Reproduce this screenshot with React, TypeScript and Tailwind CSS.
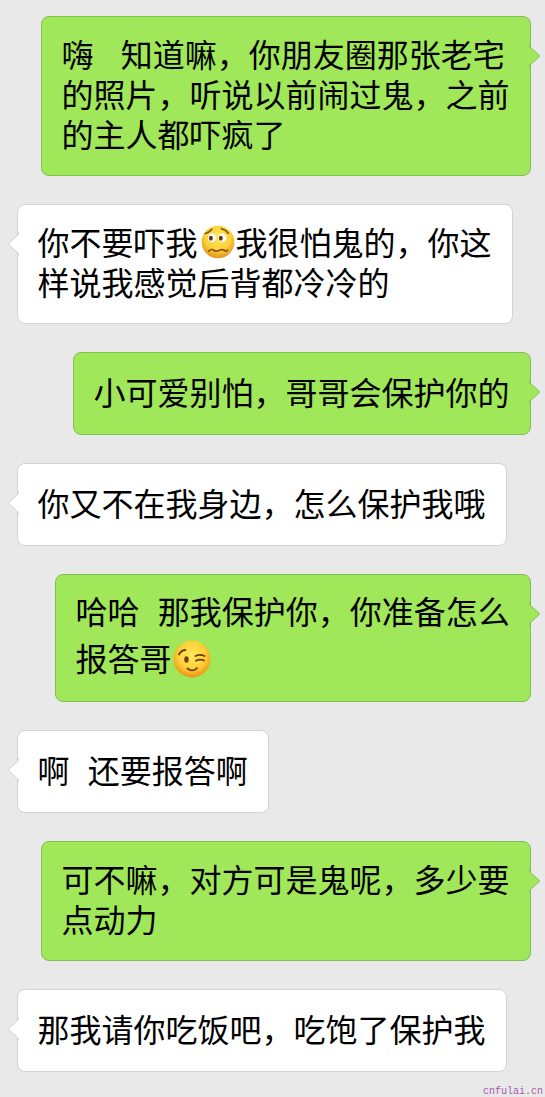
import React from 'react';
import clsx from 'clsx';

type Message = {
  id: number;
  mine: boolean;
  box: string;
  lines: React.ReactNode[];
};

function WorriedEmoji() {
  return (
    <svg viewBox="0 0 36 36" className="inline-block w-[34px] h-[34px] ml-[3px] mr-[1px] align-[-4px]">
      <defs>
        <radialGradient id="worried" cx="0.5" cy="0.35" r="0.65">
          <stop offset="0" stopColor="#ffe95c" />
          <stop offset="0.6" stopColor="#fbd13a" />
          <stop offset="1" stopColor="#e5921c" />
        </radialGradient>
      </defs>
      <circle cx="18" cy="18" r="17.3" fill="url(#worried)" />
      <ellipse cx="11.5" cy="13.500" rx="4.300" ry="4.600" fill="#fff" />
      <ellipse cx="22.500" cy="13.500" rx="4.300" ry="4.600" fill="#fff" />
      <ellipse cx="10.500" cy="14" rx="2" ry="2.600" fill="#5b3212" />
      <ellipse cx="21" cy="14" rx="2" ry="2.600" fill="#5b3212" />
      <g fill="none" stroke="#8a4f14" strokeWidth="1.7" strokeLinecap="round">
        <path d="M4.500 9C7 8.500 9.500 7 11.500 4.500" />
        <path d="M21.500 4C24 4.500 27 6 29 9" />
        <path d="M8 28C9.500 25.500 12 25.500 14 27S17 28 19 27S23 25.500 25 27S27 27.500 28 26.500" />
      </g>
    </svg>
  );
}

function WinkEmoji() {
  return (
    <svg viewBox="0 0 38 38" className="inline-block w-[38px] h-[38px] ml-[1px] align-[-7px]">
      <defs>
        <radialGradient id="wink" cx="0.5" cy="0.4" r="0.6">
          <stop offset="0" stopColor="#ffe85a" />
          <stop offset="0.6" stopColor="#ffd13b" />
          <stop offset="1" stopColor="#f0920f" />
        </radialGradient>
      </defs>
      <circle cx="19" cy="19" r="18.500" fill="url(#wink)" />
      <ellipse cx="13.500" cy="19.500" rx="2.200" ry="3.200" fill="#6b3f0c" />
      <g fill="none" stroke="#6b3f0c" strokeWidth="1.800" strokeLinecap="round">
        <path d="M6 14.500C7.500 11.500 9.500 10 12.500 10" />
        <path d="M22.500 16C26 14.200 28.500 14.500 31.500 16" />
        <path d="M23 20.800C26 19 28.500 19.300 31 20.500" />
        <path d="M14.500 28.500C17.500 31 21.500 31 24 28" />
      </g>
    </svg>
  );
}

const messages: Message[] = [
  {
    id: 1,
    mine: true,
    box: 'w-[490px] h-[160px] pt-4',
    lines: ['嗨   知道嘛，你朋友圈那张老宅', '的照片，听说以前闹过鬼，之前', '的主人都吓疯了'],
  },
  {
    id: 2,
    mine: false,
    box: 'w-[496px] h-[120px] pt-4',
    lines: [<>你不要吓我<WorriedEmoji />我很怕鬼的，你这</>, '样说我感觉后背都冷冷的'],
  },
  { id: 3, mine: true, box: 'w-[458px] h-[83px] pt-[18px]', lines: ['小可爱别怕，哥哥会保护你的'] },
  { id: 4, mine: false, box: 'w-[490px] h-[83px] pt-[18px]', lines: ['你又不在我身边，怎么保护我哦'] },
  {
    id: 5,
    mine: true,
    box: 'w-[476px] h-[128px] pt-[15px]',
    lines: ['哈哈  那我保护你，你准备怎么', <span className="block pt-[7px]">报答哥<WinkEmoji /></span>],
  },
  { id: 6, mine: false, box: 'w-[252px] h-[83px] pt-[18px]', lines: ['啊  还要报答啊'] },
  { id: 7, mine: true, box: 'w-[490px] h-[120px] pt-4', lines: ['可不嘛，对方可是鬼呢，多少要', '点动力'] },
  { id: 8, mine: false, box: 'w-[490px] h-[83px] pt-[18px]', lines: ['那我请你吃饭吧，吃饱了保护我'] },
];

function Tail({ mine }: { mine: boolean }) {
  return (
    <svg
      viewBox="0 0 12 24"
      className={clsx('absolute top-[27px] w-3 h-6', mine ? '-right-[11px]' : '-left-[11px] -scale-x-100')}
    >
      <path
        d="M0 1.500L1.500 3.500L10 11.200Q11 12 10 12.800L1.500 20.500L0 22.500Z"
        fill={mine ? '#a0e75a' : '#ffffff'}
      />
      <path
        d="M0.500 0.500Q0.500 2.500 1.500 3.500L10 11.200Q11 12 10 12.800L1.500 20.500Q0.500 21.500 0.500 23.500"
        fill="none"
        stroke={mine ? '#83bd57' : '#d3d3d3'}
      />
    </svg>
  );
}

function Bubble({ message }: { message: Message }) {
  const { mine, box, lines } = message;

  return (
    <div
      className={clsx(
        'relative shrink-0 rounded-lg border pl-[19.5px]',
        box,
        mine ? 'self-end bg-[#a0e75a] border-[#83bd57]' : 'self-start bg-white border-[#d3d3d3]'
      )}
    >
      <Tail mine={mine} />
      {lines.map((line, i) => (
        <div key={i} className="h-10 leading-[40px] whitespace-pre">
          {line}
        </div>
      ))}
    </div>
  );
}

export default function App() {
  return (
    <div className="relative w-[545px] h-[1097px] overflow-hidden bg-[#e9e9e9] text-black">
      <div className="flex flex-col gap-7 pt-4 pl-[17px] pr-[14px] font-['Noto_Sans_CJK_SC',sans-serif] text-[32px] [word-spacing:1.9px]">
        {messages.map((message) => (
          <Bubble key={message.id} message={message} />
        ))}
      </div>
      <span className="absolute right-[2px] -bottom-[2px] font-['Liberation_Mono',monospace] text-[10px] leading-[14px] text-[#a45aa8]">
        cnfulai.cn
      </span>
    </div>
  );
}
